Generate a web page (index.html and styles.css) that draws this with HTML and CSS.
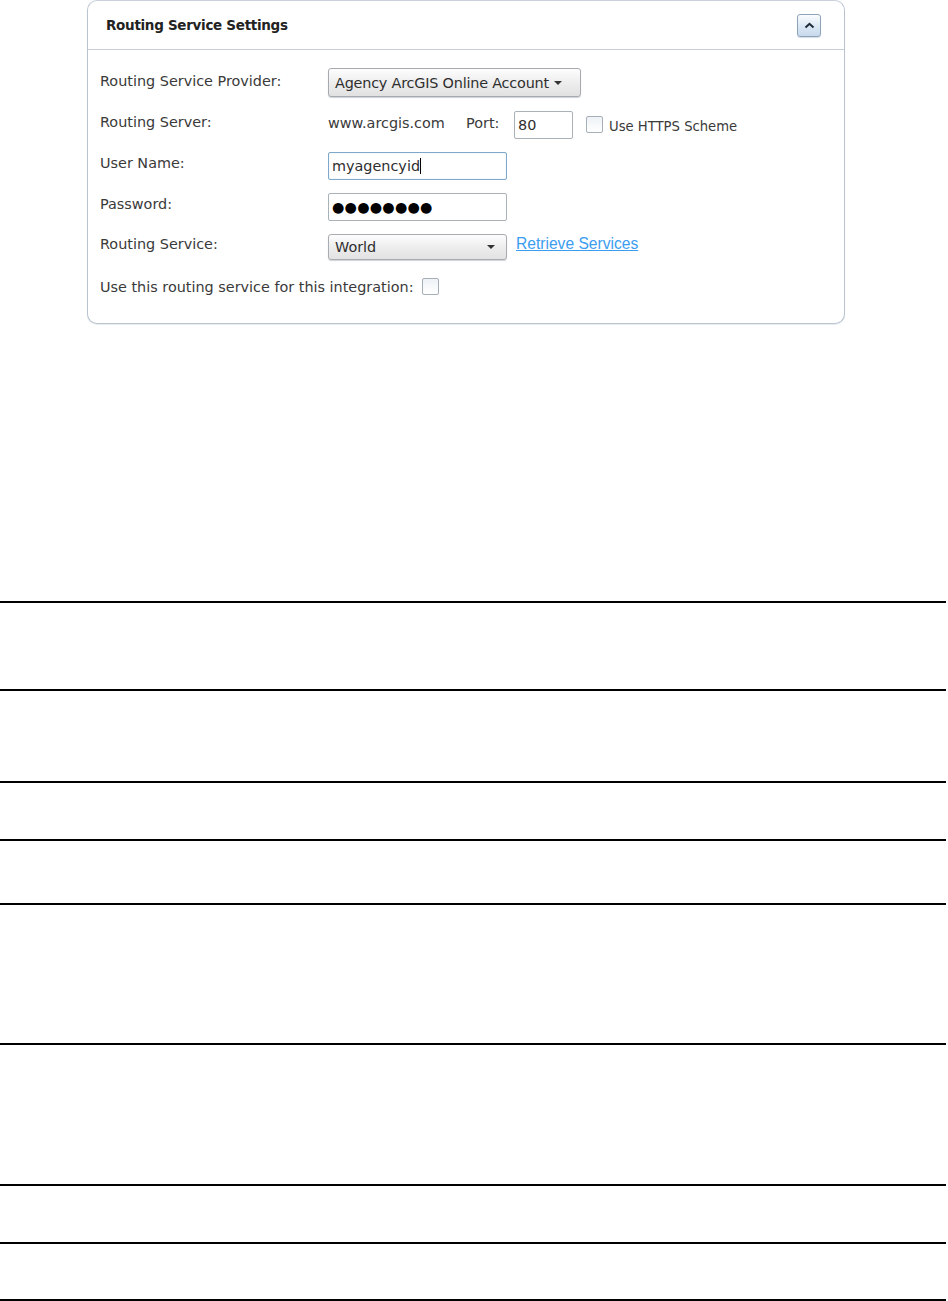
FILE: index.html
```html
<!DOCTYPE html>
<html>
<head>
<meta charset="utf-8">
<link rel="stylesheet" href="styles.css">
</head>
<body>
<div class="panel">
  <div class="panel-header">
    <span class="panel-title">Routing Service Settings</span>
    <button class="collapse-btn" aria-label="Collapse">
      <svg width="11" height="7" viewBox="0 0 11 7"><path d="M1.5 5.5 L5.5 1.8 L9.5 5.5" fill="none" stroke="#1d2a38" stroke-width="2"/></svg>
    </button>
  </div>
  <div class="panel-body">
    <div class="row">
      <span class="label">Routing Service Provider:</span>
      <div class="controls">
        <div class="dropdown-btn">Agency ArcGIS Online Account <span class="caret"></span></div>
      </div>
    </div>
    <div class="row">
      <span class="label">Routing Server:</span>
      <div class="controls">
        <span class="server">www.arcgis.com</span>
        <span class="port-label">Port:</span>
        <div class="input port">80</div>
        <span class="checkbox https-box"></span>
        <span class="small-text">Use HTTPS Scheme</span>
      </div>
    </div>
    <div class="row">
      <span class="label">User Name:</span>
      <div class="controls">
        <div class="input wide focused">myagencyid<span class="cursor"></span></div>
      </div>
    </div>
    <div class="row">
      <span class="label">Password:</span>
      <div class="controls">
        <div class="input wide dots">●●●●●●●●</div>
      </div>
    </div>
    <div class="row row-service">
      <span class="label">Routing Service:</span>
      <div class="controls">
        <div class="select">World<span class="caret"></span></div>
        <a class="link" href="#">Retrieve Services</a>
      </div>
    </div>
    <div class="row">
      <span class="inline-label">Use this routing service for this integration:</span>
      <span class="checkbox"></span>
    </div>
  </div>
</div>

<div class="rules">
  <div class="rule h88"></div>
  <div class="rule h92"></div>
  <div class="rule h58"></div>
  <div class="rule h64"></div>
  <div class="rule h140"></div>
  <div class="rule h141"></div>
  <div class="rule h58"></div>
  <div class="rule h57"></div>
  <div class="rule last"></div>
</div>
</body>
</html>
```

FILE: styles.css
```css
html, body {
  margin: 0;
  padding: 0;
  background: #ffffff;
}

body {
  font-family: "DejaVu Sans", Verdana, sans-serif;
  color: #3a3a3a;
  width: 948px;
  height: 1301px;
  overflow: hidden;
}

.panel {
  margin-left: 87px;
  width: 756px;
  height: 322px;
  border: 1px solid #b9c4d0;
  border-top-color: #c9d2dc;
  border-radius: 10px;
  background: #ffffff;
  box-shadow: 0 1px 1px #e7ecf1;
}

.panel-header {
  height: 48px;
  border-bottom: 1px solid #c6cfd9;
  display: flex;
  align-items: center;
  justify-content: space-between;
  padding: 0 23px 0 18px;
}

.panel-title {
  font-size: 13.5px;
  font-weight: bold;
  color: #222222;
  letter-spacing: -0.3px;
}

.collapse-btn {
  width: 24px;
  height: 23px;
  padding: 0;
  margin: 0;
  border: 1px solid #8fa3b8;
  border-radius: 3px;
  background: linear-gradient(#fbfcfe, #dbe7f3 55%, #c7d9ec);
  display: flex;
  align-items: center;
  justify-content: center;
  box-shadow: 0 1px 1px #d5dde6;
}

.panel-body {
  padding: 13px 0 0 12px;
}

.row {
  height: 41px;
  display: flex;
  align-items: center;
  font-size: 14.4px;
}

.row-service {
  height: 39px;
}

.label {
  width: 228px;
  flex: none;
  margin-top: -5px;
}

.controls {
  display: flex;
  align-items: center;
}

.dropdown-btn {
  height: 27px;
  width: 239px;
  border: 1px solid #a6a9ad;
  border-radius: 3px;
  background: linear-gradient(#fdfdfd, #eeeeee 50%, #e1e1e1);
  display: flex;
  align-items: center;
  padding-left: 6px;
  padding-right: 6px;
  color: #2e2e2e;
  font-size: 14.4px;
  letter-spacing: -0.2px;
  box-shadow: 0 1px 1px #cfd3d7;
  margin-top: -2px;
}

.caret {
  display: inline-block;
  width: 0;
  height: 0;
  border-left: 4px solid transparent;
  border-right: 4px solid transparent;
  border-top: 4px solid #333333;
  margin-left: 5px;
}

.server {
  width: 138px;
  margin-top: -3px;
}

.port-label {
  width: 48px;
  margin-top: -3px;
}

.input {
  height: 26px;
  border: 1px solid #a9b1b9;
  border-radius: 2px;
  background: #ffffff;
  display: flex;
  align-items: center;
  padding-left: 3px;
  box-sizing: border-box;
  color: #2e2e2e;
  font-size: 14.4px;
}

.port {
  width: 59px;
  height: 28px;
}

.wide {
  width: 179px;
  height: 28px;
}

.focused {
  border-color: #7ea7c9;
  box-shadow: inset 0 0 1px #b5cfe6;
}

.cursor {
  display: inline-block;
  width: 1px;
  height: 16px;
  background: #000;
}

.dots {
  font-family: "DejaVu Sans", sans-serif;
  font-size: 14.2px;
  letter-spacing: 0.2px;
  color: #000000;
}

.checkbox {
  display: inline-block;
  width: 15px;
  height: 15px;
  border: 1px solid #a6aeb7;
  border-radius: 2px;
  background: linear-gradient(#eef2f6, #ffffff);
  flex: none;
}

.https-box {
  margin-left: 13px;
  margin-right: 6px;
}

.small-text {
  font-size: 13.2px;
  margin-top: 3px;
}

.select {
  width: 179px;
  height: 26px;
  box-sizing: border-box;
  border: 1px solid #a8abaf;
  border-radius: 3px;
  background: linear-gradient(#fdfdfd, #ececec 55%, #e2e2e2);
  display: flex;
  align-items: center;
  justify-content: space-between;
  padding: 0 11px 0 6px;
  color: #2e2e2e;
  font-size: 14.4px;
  box-shadow: 0 1px 1px #cfd3d7;
}

.select .caret {
  margin-left: 0;
}

.link {
  color: #3b9cf0;
  font-family: "Liberation Sans", Arial, sans-serif;
  font-size: 15.6px;
  text-decoration: underline;
  margin-left: 9px;
  margin-top: -6px;
}

.inline-label {
  margin-right: 8px;
}

.rules {
  margin-top: 277px;
}

.rule {
  border-top: 2px solid #000000;
  width: 946px;
}

.h88 { height: 86px; }
.h92 { height: 90px; }
.h58 { height: 56px; }
.h64 { height: 62px; }
.h140 { height: 138px; }
.h141 { height: 139px; }
.h57 { height: 55px; }
.last { height: 0; }
```
